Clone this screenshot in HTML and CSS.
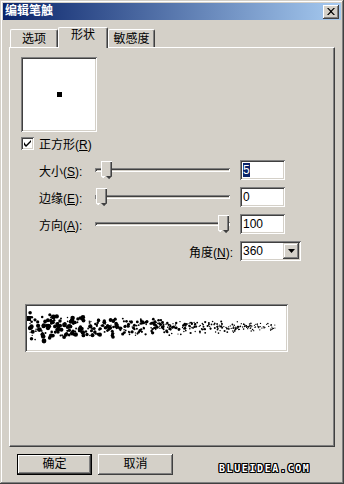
FILE: index.html
```html
<!DOCTYPE html>
<html>
<head>
  <meta charset="utf-8">
  <link rel="stylesheet" href="styles.css">
</head>
<body>
  <div class="window">
    <div class="titlebar">
      <span class="title">编辑笔触</span>
      <span class="close">
        <svg width="8" height="7" viewBox="0 0 8 7"><path d="M0 0 L1.5 0 L4 2.5 L6.5 0 L8 0 L4.8 3.5 L8 7 L6.5 7 L4 4.5 L1.5 7 L0 7 L3.2 3.5 Z" fill="#000"/></svg>
      </span>
    </div>

    <div class="tabs">
      <div class="tab t1">选项</div>
      <div class="tab t2 active">形状</div>
      <div class="tab t3">敏感度</div>
    </div>

    <div class="panel">
      <div class="preview"><div class="dot"></div></div>

      <div class="check">
        <span class="box">
          <svg width="7" height="7" viewBox="0 0 7 7"><path d="M0 2 L0 5 L2 7 L7 2 L7 0 L2 5 Z" fill="#000"/></svg>
        </span>
        <span>正方形(<u>R</u>)</span>
      </div>

      <div class="row">
        <span class="lbl">大小(<u>S</u>):</span>
        <div class="slider"><div class="track"></div><div class="thumb" style="left:6px"></div></div>
        <div class="field"><span class="sel">5</span></div>
      </div>
      <div class="row">
        <span class="lbl">边缘(<u>E</u>):</span>
        <div class="slider"><div class="track"></div><div class="thumb" style="left:1px"></div></div>
        <div class="field">0</div>
      </div>
      <div class="row">
        <span class="lbl">方向(<u>A</u>):</span>
        <div class="slider"><div class="track"></div><div class="thumb" style="left:123px"></div></div>
        <div class="field">100</div>
      </div>
      <div class="row">
        <span class="lbl wide">角度(<u>N</u>):</span>
        <div class="combo">
          <span class="combo-text">360</span>
          <span class="combo-btn">
            <svg width="7" height="4" viewBox="0 0 7 4"><path d="M0 0 L7 0 L3.5 4 Z" fill="#000"/></svg>
          </span>
        </div>
      </div>

      <div class="stroke"><svg id="stroke" width="259" height="44" viewBox="0 0 259 44"></svg></div>
    </div>

    <div class="buttons">
      <div class="btn default">确定</div>
      <div class="btn">取消</div>
      <span class="mark">BLUEIDEA.COM</span>
    </div>
  </div>
  <script src="script.js"></script>
</body>
</html>
```

FILE: styles.css
```css
body {
  margin: 0;
  background: #d4d0c8;
  font-family: "Liberation Sans", "Noto Sans CJK SC", sans-serif;
  font-size: 12px;
  color: #000;
}

.window {
  width: 344px;
  height: 484px;
  box-sizing: border-box;
  padding: 3px 3px 0 3px;
  box-shadow: inset -1px -1px #404040, inset 1px 1px #d4d0c8,
              inset -2px -2px #808080, inset 2px 2px #fff;
}

.titlebar {
  height: 17px;
  display: flex;
  align-items: center;
  justify-content: space-between;
  background: linear-gradient(to right, #0a246a, #a6caf0);
  padding: 0 2px;
}

.title {
  color: #fff;
  font-weight: bold;
  font-size: 12px;
  line-height: 17px;
}

.close {
  width: 16px;
  height: 14px;
  box-sizing: border-box;
  display: flex;
  align-items: center;
  justify-content: center;
  background: #d4d0c8;
  box-shadow: inset -1px -1px #404040, inset 1px 1px #fff,
              inset -2px -2px #808080;
}

.tabs {
  display: flex;
  align-items: flex-end;
  margin: 7px 0 0 7px;
  height: 20px;
}

.tab {
  height: 18px;
  box-sizing: border-box;
  text-align: center;
  line-height: 19px;
  border-top: 1px solid #fff;
  border-left: 1px solid #fff;
  border-right: 1px solid #404040;
  border-radius: 2px 2px 0 0;
  box-shadow: inset -1px 0 #808080;
}

.t1 { width: 48px; }
.t2 { width: 50px; }
.t3 { width: 47px; }

.tab.active {
  height: 21px;
  margin-bottom: -1px;
  position: relative;
  z-index: 1;
  background: #d4d0c8;
  line-height: 15px;
}

.panel {
  width: 326px;
  height: 400px;
  box-sizing: border-box;
  margin-left: 6px;
  border-top: 1px solid #fff;
  border-left: 1px solid #fff;
  border-right: 1px solid #404040;
  border-bottom: 1px solid #404040;
  box-shadow: inset -1px -1px #808080;
  display: flex;
  flex-direction: column;
  align-items: flex-start;
}

.preview {
  width: 76px;
  height: 75px;
  box-sizing: border-box;
  margin: 9px 0 0 11px;
  background: #fff;
  box-shadow: inset 1px 1px #808080, inset -1px -1px #fff,
              inset 2px 2px #404040, inset -2px -2px #d4d0c8;
  display: flex;
  align-items: center;
  justify-content: center;
}

.dot {
  width: 5px;
  height: 5px;
  background: #000;
}

.check {
  display: flex;
  align-items: center;
  margin: 5px 0 0 11px;
  height: 13px;
}

.box {
  width: 13px;
  height: 13px;
  box-sizing: border-box;
  background: #fff;
  margin-right: 5px;
  display: flex;
  align-items: center;
  justify-content: center;
  box-shadow: inset 1px 1px #808080, inset -1px -1px #fff,
              inset 2px 2px #404040, inset -2px -2px #d4d0c8;
}

.row {
  display: flex;
  align-items: center;
  height: 20px;
  margin: 7px 0 0 29px;
}

.check + .row {
  margin-top: 10px;
}

.lbl {
  width: 56px;
  white-space: nowrap;
}

.lbl.wide {
  width: 201px;
  box-sizing: border-box;
  text-align: right;
  padding-right: 7px;
}

.slider {
  width: 135px;
  height: 20px;
  margin-right: 10px;
  position: relative;
}

.track {
  position: absolute;
  left: 0;
  right: 0;
  top: 8px;
  height: 4px;
  box-sizing: border-box;
  box-shadow: inset 1px 1px #808080, inset -1px -1px #fff,
              inset 2px 2px #404040, inset -2px -2px #d4d0c8;
}

.thumb {
  position: absolute;
  top: 1px;
  width: 11px;
  height: 21px;
  background:
    linear-gradient(to right, #fff 1px, transparent 1px) 0 0 / 11px 16px no-repeat,
    linear-gradient(to bottom, #fff 1px, transparent 1px) 0 0 / 11px 16px no-repeat,
    linear-gradient(to left, #404040 1px, #808080 1px, #808080 2px, #d4d0c8 2px) 0 0 / 11px 16px no-repeat;
  clip-path: polygon(0 0, 100% 0, 100% 15px, 50% 21px, 0 15px);
}

.thumb::after {
  content: "";
  position: absolute;
  left: 0;
  top: 15px;
  width: 11px;
  height: 6px;
  background: linear-gradient(to bottom left, #404040 45%, #808080 45%, #808080 55%, #d4d0c8 55%) right / 6px 6px no-repeat,
              linear-gradient(to bottom right, #fff 40%, #d4d0c8 40%) left / 6px 6px no-repeat;
}

.field {
  width: 45px;
  height: 20px;
  box-sizing: border-box;
  padding: 0 3px;
  line-height: 20px;
  background: #fff;
  box-shadow: inset 1px 1px #808080, inset -1px -1px #fff,
              inset 2px 2px #404040, inset -2px -2px #d4d0c8;
}

.sel {
  background: #0a246a;
  color: #fff;
}

.combo {
  width: 61px;
  height: 20px;
  box-sizing: border-box;
  padding: 2px;
  display: flex;
  align-items: stretch;
  background: #fff;
  box-shadow: inset 1px 1px #808080, inset -1px -1px #fff,
              inset 2px 2px #404040, inset -2px -2px #d4d0c8;
}

.combo-text {
  flex: 1;
  line-height: 16px;
  padding-left: 1px;
}

.combo-btn {
  width: 16px;
  background: #d4d0c8;
  display: flex;
  align-items: center;
  justify-content: center;
  box-shadow: inset -1px -1px #404040, inset 1px 1px #d4d0c8,
              inset -2px -2px #808080, inset 2px 2px #fff;
}

.stroke {
  width: 263px;
  height: 48px;
  box-sizing: border-box;
  margin: 43px 0 0 15px;
  padding: 2px;
  background: #fff;
  box-shadow: inset 1px 1px #808080, inset -1px -1px #fff,
              inset 2px 2px #404040, inset -2px -2px #d4d0c8;
}

.stroke svg {
  display: block;
}

.buttons {
  display: flex;
  align-items: center;
  margin: 7px 0 0 14px;
}

.btn {
  width: 75px;
  height: 21px;
  box-sizing: border-box;
  text-align: center;
  line-height: 21px;
  margin-right: 6px;
  box-shadow: inset -1px -1px #404040, inset 1px 1px #fff,
              inset -2px -2px #808080, inset 2px 2px #d4d0c8;
}

.btn.default {
  border: 1px solid #000;
  line-height: 19px;
}

.mark {
  margin: 8px 0 0 40px;
  font-family: "DejaVu Sans Mono", monospace;
  font-weight: bold;
  font-size: 10px;
  letter-spacing: 1.6px;
  color: #fff;
  text-shadow: 1px 0 #000, -1px 0 #000, 0 1px #000, 0 -1px #000,
               1px 1px #000, -1px -1px #000, 1px -1px #000, -1px 1px #000;
}
```

FILE: script.js
```js
const svg = document.getElementById('stroke');
const ns = 'http://www.w3.org/2000/svg';
let seed = 11;

function rand() {
  seed = (seed * 16807) % 2147483647;
  return (seed - 1) / 2147483646;
}

function dot(x, y, r) {
  const c = document.createElementNS(ns, 'circle');
  c.setAttribute('cx', x.toFixed(1));
  c.setAttribute('cy', y.toFixed(1));
  c.setAttribute('r', r.toFixed(2));
  svg.appendChild(c);
}

const sq = document.createElementNS(ns, 'rect');
sq.setAttribute('x', 0);
sq.setAttribute('y', 10);
sq.setAttribute('width', 4);
sq.setAttribute('height', 5);
svg.appendChild(sq);

// brush dabs: big and loose on the left, small and tight on the right
for (let i = 0; i < 460; i++) {
  const t = Math.pow(rand(), 1.1);
  const x = 3 + t * 245;
  const spread = 15 * (1 - t * 0.72);
  const y = 21 + (rand() + rand() - 1) * spread;
  const r = 0.6 + (1 - t) * 2.1 * rand();
  dot(x, y, r);
}

dot(17, 35, 2.4);
dot(86, 31, 1.8);
```
